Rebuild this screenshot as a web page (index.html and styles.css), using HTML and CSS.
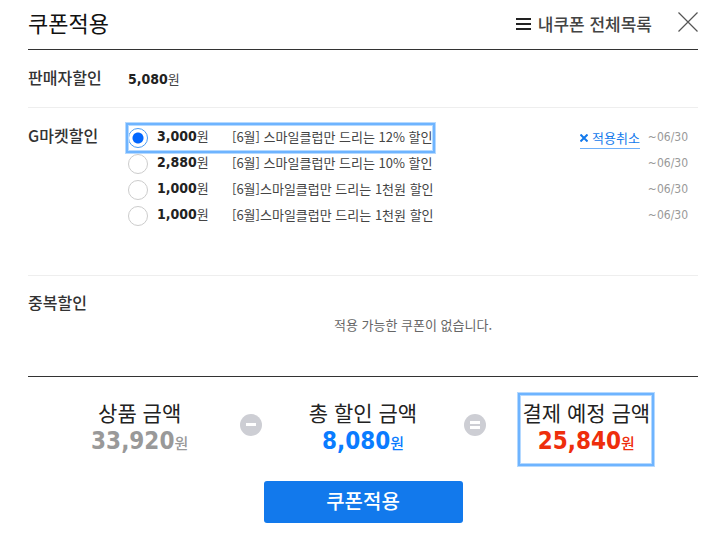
FILE: index.html
```html
<!DOCTYPE html>
<html lang="ko">

<head>
    <meta charset="UTF-8">
    <meta name="viewport" content="width=device-width, initial-scale=1.0">
    <title>쿠폰적용</title>
    <link rel="stylesheet" href="styles.css">
</head>

<body>

    <header class="header">
        <h1>쿠폰적용</h1>
        <a href="#" class="all-coupons">
            <svg width="15" height="14" viewBox="0 0 15 14" aria-hidden="true">
                <path d="M0 2h15M0 7h15M0 12h15" stroke="#222" stroke-width="2" />
            </svg>
            내쿠폰 전체목록
        </a>
        <button type="button" class="close" aria-label="닫기">
            <svg width="20" height="20" viewBox="0 0 20 20">
                <path d="M0.500 0.500l19 19M19.500 0.500l-19 19" stroke="#555" stroke-width="1.200" />
            </svg>
        </button>
    </header>

    <form>
        <section class="row seller">
            <h2>판매자할인</h2>
            <p class="price"><strong>5,080</strong>원</p>
        </section>

        <section class="row market">
            <h2>G마켓할인</h2>
            <ul class="coupons">
                <li>
                    <label class="marked">
                        <input type="radio" name="coupon" checked>
                        <span class="price"><strong>3,000</strong>원</span>
                        <span class="name">[6월] 스마일클럽만 드리는 12% 할인</span>
                    </label>
                    <a href="#" class="cancel">
                        <svg width="8" height="8" viewBox="0 0 8 8" aria-hidden="true">
                            <path d="M0.500 0.500l7 7M7.500 0.500l-7 7" stroke="#1279ec" stroke-width="2" />
                        </svg>
                        적용취소
                    </a>
                    <span class="date">~06/30</span>
                </li>
                <li>
                    <label>
                        <input type="radio" name="coupon">
                        <span class="price"><strong>2,880</strong>원</span>
                        <span class="name">[6월] 스마일클럽만 드리는 10% 할인</span>
                    </label>
                    <span class="date">~06/30</span>
                </li>
                <li>
                    <label>
                        <input type="radio" name="coupon">
                        <span class="price"><strong>1,000</strong>원</span>
                        <span class="name">[6월]스마일클럽만 드리는 1천원 할인</span>
                    </label>
                    <span class="date">~06/30</span>
                </li>
                <li>
                    <label>
                        <input type="radio" name="coupon">
                        <span class="price"><strong>1,000</strong>원</span>
                        <span class="name">[6월]스마일클럽만 드리는 1천원 할인</span>
                    </label>
                    <span class="date">~06/30</span>
                </li>
            </ul>
        </section>

        <section class="row extra">
            <h2>중복할인</h2>
            <p class="empty">적용 가능한 쿠폰이 없습니다.</p>
        </section>

        <section class="totals">
            <div class="total">
                <h3>상품 금액</h3>
                <p><strong>33,920</strong>원</p>
            </div>
            <svg width="22" height="22" viewBox="0 0 22 22" aria-hidden="true">
                <circle cx="11" cy="11" r="11" fill="#cdced4" />
                <path d="M6 10.500h10" stroke="#fff" stroke-width="3" />
            </svg>
            <div class="total discount">
                <h3>총 할인 금액</h3>
                <p><strong>8,080</strong>원</p>
            </div>
            <svg width="22" height="22" viewBox="0 0 22 22" aria-hidden="true">
                <circle cx="11" cy="11" r="11" fill="#cdced4" />
                <path d="M6 8.500h10M6 13.500h10" stroke="#fff" stroke-width="3" />
            </svg>
            <div class="total final marked">
                <h3>결제 예정 금액</h3>
                <p><strong>25,840</strong>원</p>
            </div>
        </section>

        <button type="submit" class="apply">쿠폰적용</button>
    </form>

</body>

</html>
```
FILE: styles.css
```css
* {
    margin: 0;
    padding: 0;
    box-sizing: border-box;
}

body {
    padding: 0 18px 20px 28px;
    background-color: #fff;
    color: #444;
    font-family: "Noto Sans CJK KR", sans-serif;
    font-size: 13px;
    line-height: 20px;
}

ul {
    list-style: none;
}

a {
    text-decoration: none;
}

button {
    border: none;
    cursor: pointer;
    font-family: inherit;
}

/* Header */
.header {
    display: flex;
    align-items: center;
    height: 50px;
    padding-bottom: 6px;
    border-bottom: 1px solid #333;
}

h1 {
    color: #111;
    font-size: 22px;
    font-weight: 400;
}

.all-coupons {
    display: flex;
    align-items: center;
    gap: 7px;
    margin-left: auto;
    padding-top: 4px;
    color: #444;
    font-size: 17px;
    font-weight: 500;
}

.close {
    height: 20px;
    margin-left: 26px;
    background: none;
}

.close svg {
    display: block;
}

/* Discount rows */
.row {
    display: flex;
    border-bottom: 1px solid #eee;
}

h2 {
    width: 100px;
    color: #333;
    font-size: 16px;
    font-weight: 500;
}

.price strong,
.total strong {
    font-family: "DejaVu Sans Condensed", "DejaVu Sans", sans-serif;
}

.price strong {
    color: #222;
    font-size: 14px;
}

.seller {
    min-height: 58px;
    padding-top: 17px;
}

.seller .price {
    padding-top: 2px;
}

.market {
    min-height: 168px;
    padding-top: 17px;
}

.coupons {
    flex: 1;
}

.coupons li {
    display: flex;
    align-items: center;
    height: 26px;
    padding-right: 10px;
}

.coupons label {
    display: flex;
    align-items: center;
    height: 26px;
}

.coupons input {
    appearance: none;
    width: 20px;
    height: 20px;
    border: 1px solid #ccc;
    border-radius: 50%;
}

.coupons input:checked {
    border-color: #4a9cf5;
    background: radial-gradient(circle, #06f 5px, #fff 6px);
}

.coupons .price {
    width: 75px;
    margin-left: 9px;
    padding-bottom: 4px;
}

.coupons .name {
    padding-bottom: 2px;
}

.cancel {
    display: flex;
    align-items: center;
    gap: 4px;
    margin-left: auto;
    border-bottom: 1px solid #6eb0fa;
    color: #1279ec;
}

.date {
    margin-left: auto;
    padding-bottom: 2px;
    color: #999;
    font-family: "DejaVu Sans Condensed", "DejaVu Sans", sans-serif;
    font-size: 12px;
}

.cancel + .date {
    margin-left: 8px;
}

.extra {
    min-height: 101px;
    padding-top: 16px;
    border-bottom-color: #333;
}

.empty {
    flex: 1;
    padding-top: 23px;
    text-align: center;
    color: #666;
}

/* Highlight frame */
.marked {
    position: relative;
}

.marked::before {
    content: "";
    position: absolute;
    inset: -2px;
    border: 2px solid #6eb4ff;
    box-shadow: 0 0 0 1px #b5d9ff, inset 0 0 0 1px #b5d9ff;
}

/* Totals */
.totals {
    display: grid;
    grid-template-columns: 1fr 22px 1fr 22px 1fr;
    padding: 18px 11px 0;
}

.totals svg {
    margin-top: 19px;
}

.total {
    justify-self: center;
    padding: 3px 2px 6px;
    color: #999;
    text-align: center;
}

.total h3 {
    color: #222;
    font-size: 21px;
    font-weight: 400;
    line-height: 28px;
}

.total p {
    font-size: 15px;
    font-weight: 500;
    line-height: 30px;
}

.total strong {
    font-size: 24px;
}

.discount {
    color: #0a7cff;
}

.final {
    color: #ee2e0c;
}

.apply {
    display: block;
    width: 199px;
    height: 42px;
    margin: 17px auto 0;
    padding-bottom: 4px;
    border-radius: 3px;
    background-color: #1279ec;
    color: #fff;
    font-size: 20px;
    font-weight: 500;
}
```
